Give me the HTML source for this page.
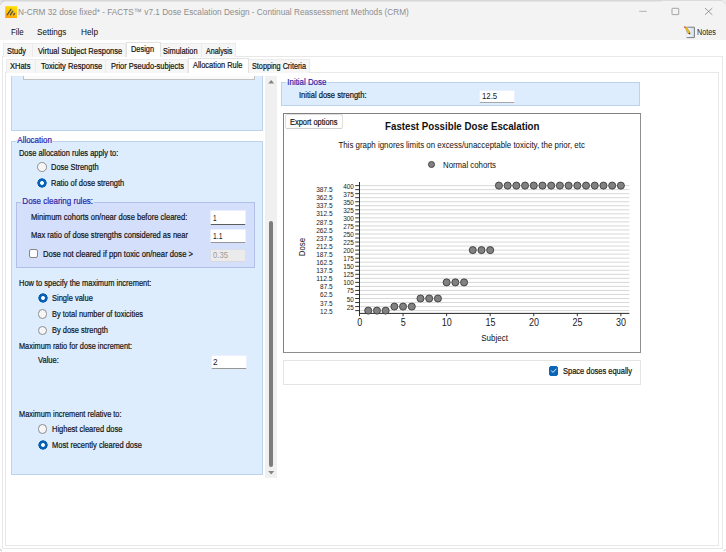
<!DOCTYPE html>
<html lang="en">
<head>
<meta charset="utf-8">
<title>N-CRM 32 dose fixed* - FACTS v7.1 Dose Escalation Design</title>
<style>
html,body{margin:0;padding:0;}
body{width:726px;height:552px;overflow:hidden;background:#fff;position:relative;font-family:"Liberation Sans",Arial,sans-serif;}
#win{position:absolute;left:0;top:0;width:726px;height:552px;overflow:hidden;background:#fff;}
#win div,#win span,#win svg{position:absolute;box-sizing:border-box;}
.t{white-space:pre;line-height:12px;height:12px;transform-origin:0 0;-webkit-text-stroke:0.2px currentColor;}
#titlebar{left:0;top:0;width:726px;height:24px;background:#f3f3f3;}
#topedge{left:0;top:0;width:662px;height:2px;background:linear-gradient(#d6d6d6 0,#dadada 55%,#f3f3f3 100%);}
#menubar{left:0;top:24px;width:726px;height:16px;background:#f3f3f3;}
#edgeL{left:0;top:0;width:1px;height:552px;background:#e6e6e6;}
#edgeR{left:725px;top:0;width:1px;height:552px;background:#fafafa;}
#edgeB{left:0;top:551px;width:726px;height:1px;background:#f6f6f6;}
.tc{border:1px solid #e8e8e8;background:#fff;}
#tc1{left:2px;top:56px;width:721px;height:493px;}
#tc2{left:5px;top:72px;width:714px;height:474px;}
.tab{border:1px solid #ebebeb;border-bottom:none;background:#f6f6f6;}
.tab.sel{background:#fff;border-color:#e2e2e2;}
.gb{background:#ddedfe;border:1px solid #bdd3ec;}
#gbTop{left:11px;top:76px;width:252px;height:55px;border-top:none;}
#lstBox{left:23px;top:76px;width:232px;height:4px;background:#fafafa;border:1px solid #c2c2c2;border-top:none;}
#gbAlloc{left:11px;top:141px;width:252px;height:334px;}
#gbClear{left:16px;top:202px;width:239px;height:66px;background:#d4e0fb;border-color:#b2c0e7;}
#gbInit{left:281px;top:82px;width:359px;height:24px;}
.val{-webkit-text-stroke:0 transparent;}
.gbl{background:linear-gradient(#fff 0,#fff 6.1px,#ddedfe 6.1px);padding:0 1.5px;margin-left:-1.5px;}
.gbl2{background:linear-gradient(#ddedfe 0,#ddedfe 6.6px,#d4e0fb 6.6px);padding:0 1.5px;margin-left:-1.5px;}
.gbl3{background:linear-gradient(#fff 0,#fff 5.7px,#ddedfe 5.7px);padding:0 1.5px;margin-left:-1.5px;}
.tb{background:#fff;border:1px solid #eaf0fd;border-bottom:1px solid #969696;border-radius:1.5px;}
.tb.foc{border-bottom-color:#5c5c5c;}
.tb.dis{background:#ebebeb;border-color:#dedfe4;border-bottom-color:#d8d9de;border-radius:2px;}
.rd{width:9.6px;height:9.6px;border-radius:50%;background:#f6f6f6;border:1px solid #8c8c8c;}
.rd.on{border:none;width:10px;height:10px;margin:-0.2px 0 0 -0.2px;background:radial-gradient(circle at 50% 50%,#fff 0,#fff 1.5px,#0560b6 2.3px,#0560b6 4.4px,rgba(5,96,182,0) 5px);}
.cb{width:9.4px;height:9.4px;border-radius:2px;background:#fdfdfd;border:0.9px solid #868686;}
.cb.on{background:#0a64b8;border-color:#0a64b8;}
#sbTrack{left:265px;top:76px;width:12px;height:402px;background:#f0f0f0;}
#sbThumb{left:269px;top:221px;width:4.2px;height:245.5px;background:#7c7c7c;border-radius:2.1px;}
#chartPanel{left:283px;top:113px;width:358px;height:240px;border:1px solid #808080;border-right-color:#8e8e8e;border-bottom-color:#8e8e8e;background:#fff;}
#btnExport{left:285px;top:114px;width:58px;height:15px;border:1px solid #dfdfdf;border-bottom-color:#cfcfcf;border-radius:2.5px;background:#fefefe;}
#optPanel{left:283px;top:360px;width:358px;height:25px;border:1px solid #e4e4e4;background:#fff;}
svg.chart{overflow:visible;}

</style>
</head>
<body>
<div id="win">
<div id="titlebar"></div>
<div id="topedge"></div>
<div id="menubar"></div>
<svg id="corner" style="left:662px;top:0" width="64" height="6" viewBox="0 0 64 6"><path d="M60 0H64V4.2A3.8 3.8 0 0 0 60 0Z" fill="#ebebeb"/><path d="M0 0.5H59A3.8 3.8 0 0 1 62.9 4.4" stroke="#d8d8d8" stroke-width="0.9" fill="none"/></svg>
<svg id="cornerL" style="left:0;top:0" width="6" height="6" viewBox="0 0 6 6"><path d="M0 0H4A4 4 0 0 0 0 4Z" fill="#e4e4e4"/><path d="M0.5 4.6A4 4 0 0 1 4.4 0.9" stroke="#c9c9c9" stroke-width="0.9" fill="none"/></svg>
<svg id="appicon" style="left:5px;top:5.5px" width="12.4" height="12.4" viewBox="0 0 12.4 12.4"><defs><linearGradient id="ig" x1="0.6" y1="0" x2="0.3" y2="1"><stop offset="0" stop-color="#ffdf00"/><stop offset="0.55" stop-color="#ffc107"/><stop offset="1" stop-color="#ff9d0a"/></linearGradient></defs><rect x="0.2" y="0.2" width="11.9" height="12" fill="url(#ig)"/><path d="M2.2 8.8L6 3.3M5.4 8.8L7.8 5.2M8.6 8.7L9.6 7.5" stroke="#50504a" stroke-width="1.35" stroke-linecap="round" fill="none"/></svg>
<svg id="winctl" style="left:630px;top:2px" width="90" height="20" viewBox="630 2 90 20"><path d="M639.2 11.3H646.8" stroke="#a0a0a0" stroke-width="0.8" fill="none"/><rect x="672" y="8.3" width="6.7" height="6.3" rx="0.5" stroke="#848484" stroke-width="0.7" fill="none"/><path d="M705 8.1L712.3 14.8M712.3 8.1L705 14.8" stroke="#7c7c7c" stroke-width="0.75" fill="none"/></svg>
<svg id="notesicon" style="left:683px;top:26.4px" width="13" height="13" viewBox="0 0 13 13"><defs><linearGradient id="ng" x1="0" y1="0" x2="1" y2="0"><stop offset="0" stop-color="#f4f6fb"/><stop offset="1" stop-color="#d5deee"/></linearGradient></defs><path d="M3.4 1.3H11.2V11.4H3.4Z" fill="url(#ng)"/><path d="M4.2 1.2H11.4V11.6H3.6" stroke="#6e7078" stroke-width="0.9" fill="none"/><path d="M3.6 1.3V11.4" stroke="#c9ced8" stroke-width="0.6" fill="none"/><path d="M3.2 9.6H8.2" stroke="#fff" stroke-width="0.7"/><path d="M1.7 1.1L3.3 0.9L7.1 6.6L5.3 7.7Z" fill="#efc21f" stroke="#a87c12" stroke-width="0.5"/><path d="M0.7 0.9L1.7 0.2L3.1 1L1.6 2Z" fill="#d8584c"/><path d="M5.3 7.7L7.1 6.6L7.2 8.4Z" fill="#3a3a3a"/></svg>

<div class="tc" id="tc1"></div>
<svg id="cornerB" style="left:0;top:548px" width="726" height="4" viewBox="0 0 726 4"><path d="M0.3 1.2Q0.6 2.6 2 2.9" stroke="#b4b4b4" stroke-width="0.9" fill="none"/><path d="M725.3 1.2Q725 2.6 723.6 2.9" stroke="#b4b4b4" stroke-width="0.9" fill="none"/></svg>
<div class="tab" style="left:3px;top:43px;width:30px;height:14px"></div>
<div class="tab" style="left:32px;top:43px;width:94px;height:14px"></div>
<div class="tab" style="left:159px;top:43px;width:43px;height:14px"></div>
<div class="tab" style="left:201px;top:43px;width:35px;height:14px"></div>
<div class="tab sel" style="left:126px;top:42px;width:35px;height:15px"></div>

<div class="tc" id="tc2"></div>
<div class="tab" style="left:6px;top:59px;width:30px;height:14px"></div>
<div class="tab" style="left:35px;top:59px;width:71px;height:14px"></div>
<div class="tab" style="left:105px;top:59px;width:83px;height:14px"></div>
<div class="tab" style="left:248px;top:59px;width:62px;height:14px"></div>
<div class="tab sel" style="left:188px;top:58px;width:61px;height:15px"></div>

<div class="gb" id="gbTop"></div>
<div id="lstBox"></div>
<div class="gb" id="gbAlloc"></div>
<div class="gb" id="gbClear"></div>

<div class="rd" style="left:37.2px;top:162.1px"></div>
<div class="rd on" style="left:37.2px;top:178.3px"></div>
<div class="tb foc" style="left:210px;top:210px;width:36px;height:15px"></div>
<div class="tb" style="left:210px;top:229px;width:36px;height:14px"></div>
<div class="tb dis" style="left:210px;top:249px;width:36px;height:13px"></div>
<div class="cb" style="left:29px;top:249px"></div>
<div class="rd on" style="left:37.9px;top:292.9px"></div>
<div class="rd" style="left:37.9px;top:309.2px"></div>
<div class="rd" style="left:37.9px;top:325.5px"></div>
<div class="tb" style="left:211px;top:355px;width:36px;height:14px"></div>
<div class="rd" style="left:37.9px;top:424.1px"></div>
<div class="rd on" style="left:37.9px;top:439.9px"></div>

<div id="sbTrack"></div>
<div id="sbThumb"></div>
<svg id="sbArrows" style="left:265px;top:73px" width="12" height="405" viewBox="265 73 12 405"><path d="M268.2 83.6L271.2 79.9L274.2 83.6Z M268.2 470.9L274.2 470.9L271.2 474.6Z" fill="#858585"/></svg>

<div class="gb" id="gbInit"></div>
<div class="tb" style="left:479px;top:90px;width:36px;height:13px;border-bottom-color:#a6a6a6"></div>
<div id="chartPanel"></div>
<div id="btnExport"></div>
<svg class="chart" width="358" height="240" viewBox="283 113 358 240" style="left:283px;top:113px">
<path d="M359.5 310.60H629.4M359.5 306.57H629.4M359.5 302.54H629.4M359.5 298.50H629.4M359.5 294.47H629.4M359.5 290.44H629.4M359.5 286.41H629.4M359.5 282.38H629.4M359.5 278.34H629.4M359.5 274.31H629.4M359.5 270.28H629.4M359.5 266.25H629.4M359.5 262.22H629.4M359.5 258.18H629.4M359.5 254.15H629.4M359.5 250.12H629.4M359.5 246.09H629.4M359.5 242.06H629.4M359.5 238.02H629.4M359.5 233.99H629.4M359.5 229.96H629.4M359.5 225.93H629.4M359.5 221.90H629.4M359.5 217.86H629.4M359.5 213.83H629.4M359.5 209.80H629.4M359.5 205.77H629.4M359.5 201.74H629.4M359.5 197.70H629.4M359.5 193.67H629.4M359.5 189.64H629.4M359.5 185.61H629.4" stroke="#c2c2c2" stroke-width="0.65" fill="none"/>
<path d="M355.2 310.60H359.5M355.2 306.57H359.5M355.2 302.54H359.5M355.2 298.50H359.5M355.2 294.47H359.5M355.2 290.44H359.5M355.2 286.41H359.5M355.2 282.38H359.5M355.2 278.34H359.5M355.2 274.31H359.5M355.2 270.28H359.5M355.2 266.25H359.5M355.2 262.22H359.5M355.2 258.18H359.5M355.2 254.15H359.5M355.2 250.12H359.5M355.2 246.09H359.5M355.2 242.06H359.5M355.2 238.02H359.5M355.2 233.99H359.5M355.2 229.96H359.5M355.2 225.93H359.5M355.2 221.90H359.5M355.2 217.86H359.5M355.2 213.83H359.5M355.2 209.80H359.5M355.2 205.77H359.5M355.2 201.74H359.5M355.2 197.70H359.5M355.2 193.67H359.5M355.2 189.64H359.5M355.2 185.61H359.5M359.50 313V316.2M403.06 313V316.2M446.63 313V316.2M490.19 313V316.2M533.76 313V316.2M577.33 313V316.2M620.89 313V316.2" stroke="#1e1e1e" stroke-width="0.9" fill="none"/>
<path d="M359.5 182V313.4H629.4" stroke="#2a2a2a" stroke-width="1" fill="none"/>
<g font-family="'Liberation Sans',Arial,sans-serif" font-size="7.3" fill="#1c1c1c" text-anchor="end">
<text x="332.6" y="314.20" textLength="12.5" lengthAdjust="spacingAndGlyphs">12.5</text>
<text x="353.9" y="310.37" textLength="7.1" lengthAdjust="spacingAndGlyphs">25</text>
<text x="332.6" y="305.94" textLength="12.5" lengthAdjust="spacingAndGlyphs">37.5</text>
<text x="353.9" y="301.90" textLength="7.1" lengthAdjust="spacingAndGlyphs">50</text>
<text x="332.6" y="297.37" textLength="12.5" lengthAdjust="spacingAndGlyphs">62.5</text>
<text x="353.9" y="293.34" textLength="7.1" lengthAdjust="spacingAndGlyphs">75</text>
<text x="332.6" y="289.01" textLength="12.5" lengthAdjust="spacingAndGlyphs">87.5</text>
<text x="353.9" y="285.28" textLength="10.7" lengthAdjust="spacingAndGlyphs">100</text>
<text x="332.6" y="280.94" textLength="16.4" lengthAdjust="spacingAndGlyphs">112.5</text>
<text x="353.9" y="277.21" textLength="10.7" lengthAdjust="spacingAndGlyphs">125</text>
<text x="332.6" y="272.88" textLength="16.4" lengthAdjust="spacingAndGlyphs">137.5</text>
<text x="353.9" y="269.15" textLength="10.7" lengthAdjust="spacingAndGlyphs">150</text>
<text x="332.6" y="264.82" textLength="16.4" lengthAdjust="spacingAndGlyphs">162.5</text>
<text x="353.9" y="261.08" textLength="10.7" lengthAdjust="spacingAndGlyphs">175</text>
<text x="332.6" y="256.75" textLength="16.4" lengthAdjust="spacingAndGlyphs">187.5</text>
<text x="353.9" y="253.02" textLength="10.7" lengthAdjust="spacingAndGlyphs">200</text>
<text x="332.6" y="248.69" textLength="16.4" lengthAdjust="spacingAndGlyphs">212.5</text>
<text x="353.9" y="244.96" textLength="10.7" lengthAdjust="spacingAndGlyphs">225</text>
<text x="332.6" y="240.62" textLength="16.4" lengthAdjust="spacingAndGlyphs">237.5</text>
<text x="353.9" y="236.89" textLength="10.7" lengthAdjust="spacingAndGlyphs">250</text>
<text x="332.6" y="232.56" textLength="16.4" lengthAdjust="spacingAndGlyphs">262.5</text>
<text x="353.9" y="228.83" textLength="10.7" lengthAdjust="spacingAndGlyphs">275</text>
<text x="332.6" y="224.50" textLength="16.4" lengthAdjust="spacingAndGlyphs">287.5</text>
<text x="353.9" y="220.76" textLength="10.7" lengthAdjust="spacingAndGlyphs">300</text>
<text x="332.6" y="216.43" textLength="16.4" lengthAdjust="spacingAndGlyphs">312.5</text>
<text x="353.9" y="212.70" textLength="10.7" lengthAdjust="spacingAndGlyphs">325</text>
<text x="332.6" y="208.37" textLength="16.4" lengthAdjust="spacingAndGlyphs">337.5</text>
<text x="353.9" y="204.64" textLength="10.7" lengthAdjust="spacingAndGlyphs">350</text>
<text x="332.6" y="200.30" textLength="16.4" lengthAdjust="spacingAndGlyphs">362.5</text>
<text x="353.9" y="196.57" textLength="10.7" lengthAdjust="spacingAndGlyphs">375</text>
<text x="332.6" y="192.24" textLength="16.4" lengthAdjust="spacingAndGlyphs">387.5</text>
<text x="353.9" y="188.51" textLength="10.7" lengthAdjust="spacingAndGlyphs">400</text>
</g>
<g font-family="'Liberation Sans',Arial,sans-serif" font-size="10" fill="#1c1c1c" text-anchor="middle">
<text x="359.70" y="325.6" textLength="5.0" lengthAdjust="spacingAndGlyphs">0</text>
<text x="403.26" y="325.6" textLength="5.0" lengthAdjust="spacingAndGlyphs">5</text>
<text x="446.83" y="325.6" textLength="10.0" lengthAdjust="spacingAndGlyphs">10</text>
<text x="490.39" y="325.6" textLength="10.0" lengthAdjust="spacingAndGlyphs">15</text>
<text x="533.96" y="325.6" textLength="10.0" lengthAdjust="spacingAndGlyphs">20</text>
<text x="577.53" y="325.6" textLength="10.0" lengthAdjust="spacingAndGlyphs">25</text>
<text x="621.09" y="325.6" textLength="10.0" lengthAdjust="spacingAndGlyphs">30</text>
</g>
<g fill="#818181" stroke="#383838" stroke-width="0.85">
<circle cx="368.21" cy="310.60" r="3.55"/>
<circle cx="376.93" cy="310.60" r="3.55"/>
<circle cx="385.64" cy="310.60" r="3.55"/>
<circle cx="394.35" cy="306.57" r="3.55"/>
<circle cx="403.06" cy="306.57" r="3.55"/>
<circle cx="411.78" cy="306.57" r="3.55"/>
<circle cx="420.49" cy="298.50" r="3.55"/>
<circle cx="429.20" cy="298.50" r="3.55"/>
<circle cx="437.92" cy="298.50" r="3.55"/>
<circle cx="446.63" cy="282.38" r="3.55"/>
<circle cx="455.34" cy="282.38" r="3.55"/>
<circle cx="464.06" cy="282.38" r="3.55"/>
<circle cx="472.77" cy="250.12" r="3.55"/>
<circle cx="481.48" cy="250.12" r="3.55"/>
<circle cx="490.19" cy="250.12" r="3.55"/>
<circle cx="498.91" cy="185.61" r="3.55"/>
<circle cx="507.62" cy="185.61" r="3.55"/>
<circle cx="516.33" cy="185.61" r="3.55"/>
<circle cx="525.05" cy="185.61" r="3.55"/>
<circle cx="533.76" cy="185.61" r="3.55"/>
<circle cx="542.47" cy="185.61" r="3.55"/>
<circle cx="551.19" cy="185.61" r="3.55"/>
<circle cx="559.90" cy="185.61" r="3.55"/>
<circle cx="568.61" cy="185.61" r="3.55"/>
<circle cx="577.33" cy="185.61" r="3.55"/>
<circle cx="586.04" cy="185.61" r="3.55"/>
<circle cx="594.75" cy="185.61" r="3.55"/>
<circle cx="603.46" cy="185.61" r="3.55"/>
<circle cx="612.18" cy="185.61" r="3.55"/>
<circle cx="620.89" cy="185.61" r="3.55"/>
<circle cx="431.5" cy="164.5" r="3.05"/>
</g>
<g font-family="'Liberation Sans',Arial,sans-serif" fill="#111">
<text x="385.1" y="129.9" font-size="10.4" font-weight="bold" textLength="154.4" lengthAdjust="spacingAndGlyphs">Fastest Possible Dose Escalation</text>
<text x="338.4" y="147.9" font-size="9.4" textLength="246.5" lengthAdjust="spacingAndGlyphs">This graph ignores limits on excess/unacceptable toxicity, the prior, etc</text>
<text x="443" y="167.8" font-size="9.1" textLength="53" lengthAdjust="spacingAndGlyphs">Normal cohorts</text>
<text x="481.2" y="341" font-size="9.4" textLength="26.7" lengthAdjust="spacingAndGlyphs">Subject</text>
<text transform="translate(304.8 256.2) rotate(-90)" font-size="9.7" textLength="18.3" lengthAdjust="spacingAndGlyphs">Dose</text>
</g>
</svg>
<div id="optPanel"></div>
<div class="cb on" style="left:549px;top:366.2px"></div>
<svg id="chk" style="left:549px;top:366.2px" width="9.4" height="9.4" viewBox="0 0 9.4 9.4"><path d="M2.4 4.8L4 6.4L7.1 3.1" stroke="#fff" stroke-width="0.9" fill="none" stroke-linecap="round" stroke-linejoin="round"/></svg>

<span class="t val" id="t0" style="left:18.20px;top:6.41px;font-size:9.20px;color:#8e8e8e;transform:scaleX(0.8962);">N-CRM 32 dose fixed* - FACTS™ v7.1 Dose Escalation Design - Continual Reassessment Methods (CRM)</span>
<span class="t val" id="t1" style="left:10.70px;top:25.78px;font-size:9.30px;color:#0c0c0c;transform:scaleX(0.8475);">File</span>
<span class="t val" id="t2" style="left:37.00px;top:25.78px;font-size:9.30px;color:#0c0c0c;transform:scaleX(0.8752);">Settings</span>
<span class="t val" id="t3" style="left:80.70px;top:25.78px;font-size:9.30px;color:#0c0c0c;transform:scaleX(0.8889);">Help</span>
<span class="t val" id="t4" style="left:697.40px;top:25.72px;font-size:8.90px;color:#1a1a1a;transform:scaleX(0.8194);">Notes</span>
<span class="t" id="t5" style="left:7.40px;top:44.72px;font-size:8.90px;color:#111;transform:scaleX(0.8369);">Study</span>
<span class="t" id="t6" style="left:37.60px;top:44.72px;font-size:8.90px;color:#111;transform:scaleX(0.8462);">Virtual Subject Response</span>
<span class="t" id="t7" style="left:131.00px;top:43.12px;font-size:8.90px;color:#111;transform:scaleX(0.8321);">Design</span>
<span class="t" id="t8" style="left:163.00px;top:44.72px;font-size:8.90px;color:#111;transform:scaleX(0.8326);">Simulation</span>
<span class="t" id="t9" style="left:206.30px;top:44.72px;font-size:8.90px;color:#111;transform:scaleX(0.7955);">Analysis</span>
<span class="t" id="t10" style="left:10.20px;top:59.92px;font-size:8.90px;color:#111;transform:scaleX(0.8440);">XHats</span>
<span class="t" id="t11" style="left:40.50px;top:59.92px;font-size:8.90px;color:#111;transform:scaleX(0.8556);">Toxicity Response</span>
<span class="t" id="t12" style="left:111.00px;top:59.92px;font-size:8.90px;color:#111;transform:scaleX(0.8407);">Prior Pseudo-subjects</span>
<span class="t" id="t13" style="left:192.50px;top:58.92px;font-size:8.90px;color:#111;transform:scaleX(0.8361);">Allocation Rule</span>
<span class="t" id="t14" style="left:252.00px;top:59.92px;font-size:8.90px;color:#111;transform:scaleX(0.8168);">Stopping Criteria</span>
<span class="t gbl" id="t15" style="left:17.50px;top:133.92px;font-size:8.90px;color:#2d22a8;transform:scaleX(0.8965);">Allocation</span>
<span class="t" id="t16" style="left:18.50px;top:147.12px;font-size:8.90px;color:#111;transform:scaleX(0.8386);">Dose allocation rules apply to:</span>
<span class="t" id="t17" style="left:51.40px;top:160.92px;font-size:8.90px;color:#111;transform:scaleX(0.8390);">Dose Strength</span>
<span class="t" id="t18" style="left:51.40px;top:177.32px;font-size:8.90px;color:#111;transform:scaleX(0.8429);">Ratio of dose strength</span>
<span class="t gbl2" id="t19" style="left:22.00px;top:194.92px;font-size:8.90px;color:#2d22a8;transform:scaleX(0.9014);">Dose clearing rules:</span>
<span class="t" id="t20" style="left:30.60px;top:210.92px;font-size:8.90px;color:#111;transform:scaleX(0.8522);">Minimum cohorts on/near dose before cleared:</span>
<span class="t" id="t21" style="left:30.60px;top:229.12px;font-size:8.90px;color:#111;transform:scaleX(0.8486);">Max ratio of dose strengths considered as near</span>
<span class="t" id="t22" style="left:43.00px;top:247.92px;font-size:8.90px;color:#111;transform:scaleX(0.8625);">Dose not cleared if ppn toxic on/near dose &gt;</span>
<span class="t val" id="t23" style="left:213.00px;top:211.65px;font-size:8.50px;color:#1a1a1a;transform:scaleX(0.7600);">1</span>
<span class="t val" id="t24" style="left:213.00px;top:229.95px;font-size:8.50px;color:#1a1a1a;transform:scaleX(0.8032);">1.1</span>
<span class="t val" id="t25" style="left:212.60px;top:249.15px;font-size:8.50px;color:#9a9a9a;transform:scaleX(0.9065);">0.35</span>
<span class="t" id="t26" style="left:18.50px;top:277.32px;font-size:8.90px;color:#111;transform:scaleX(0.8415);">How to specify the maximum increment:</span>
<span class="t" id="t27" style="left:51.90px;top:291.62px;font-size:8.90px;color:#111;transform:scaleX(0.8437);">Single value</span>
<span class="t" id="t28" style="left:51.90px;top:307.92px;font-size:8.90px;color:#111;transform:scaleX(0.8385);">By total number of toxicities</span>
<span class="t" id="t29" style="left:51.90px;top:324.32px;font-size:8.90px;color:#111;transform:scaleX(0.8392);">By dose strength</span>
<span class="t" id="t30" style="left:18.50px;top:339.72px;font-size:8.90px;color:#111;transform:scaleX(0.8278);">Maximum ratio for dose increment:</span>
<span class="t" id="t31" style="left:37.60px;top:354.02px;font-size:8.90px;color:#111;transform:scaleX(0.8484);">Value:</span>
<span class="t val" id="t32" style="left:213.00px;top:355.52px;font-size:8.90px;color:#1a1a1a;transform:scaleX(0.9316);">2</span>
<span class="t" id="t33" style="left:18.50px;top:407.72px;font-size:8.90px;color:#111;transform:scaleX(0.8312);">Maximum increment relative to:</span>
<span class="t" id="t34" style="left:51.90px;top:422.92px;font-size:8.90px;color:#111;transform:scaleX(0.8442);">Highest cleared dose</span>
<span class="t" id="t35" style="left:51.90px;top:438.62px;font-size:8.90px;color:#111;transform:scaleX(0.8486);">Most recently cleared dose</span>
<span class="t gbl3" id="t36" style="left:287.00px;top:75.62px;font-size:8.90px;color:#2d22a8;transform:scaleX(0.8883);">Initial Dose</span>
<span class="t" id="t37" style="left:299.00px;top:89.12px;font-size:8.90px;color:#111;transform:scaleX(0.8497);">Initial dose strength:</span>
<span class="t val" id="t38" style="left:481.80px;top:89.95px;font-size:8.50px;color:#1a1a1a;transform:scaleX(0.9186);">12.5</span>
<span class="t" id="t39" style="left:289.60px;top:115.72px;font-size:8.90px;color:#111;transform:scaleX(0.8355);">Export options</span>
<span class="t" id="t40" style="left:562.70px;top:365.02px;font-size:8.90px;color:#111;transform:scaleX(0.8424);">Space doses equally</span>
</div>

</body>
</html>
